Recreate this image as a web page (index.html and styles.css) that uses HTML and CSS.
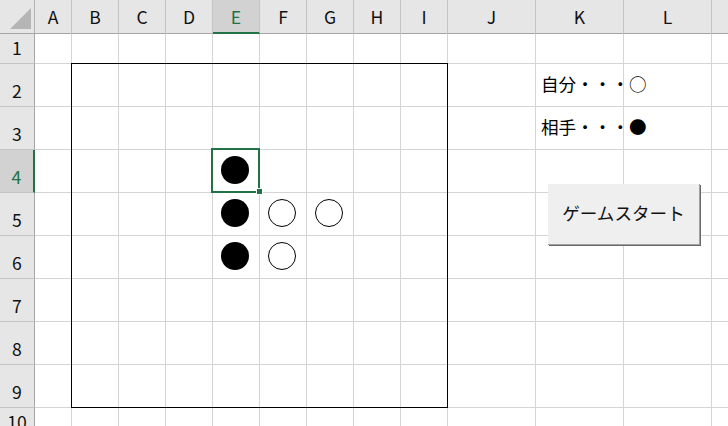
FILE: index.html
```html
<!DOCTYPE html>
<html lang="ja">
<head>
    <meta charset="UTF-8">
    <meta name="viewport" content="width=device-width, initial-scale=1.0">
    <title>オセロ</title>
    <link rel="stylesheet" href="styles.css">
</head>
<body>

    <div class="sheet">
        <!-- column headers -->
        <div class="corner"><span class="tri"></span></div>
        <div class="hd">A</div><div class="hd">B</div><div class="hd">C</div><div class="hd">D</div>
        <div class="hd on">E</div><div class="hd">F</div><div class="hd">G</div><div class="hd">H</div>
        <div class="hd">I</div><div class="hd">J</div><div class="hd">K</div><div class="hd">L</div><div class="hd"></div>

        <!-- row 1 -->
        <div class="rh">1</div>
        <div class="c"></div><div class="c"></div><div class="c"></div><div class="c"></div><div class="c"></div><div class="c"></div>
        <div class="c"></div><div class="c"></div><div class="c"></div><div class="c"></div><div class="c"></div><div class="c"></div><div class="c"></div>

        <!-- row 2 -->
        <div class="rh">2</div>
        <div class="c"></div><div class="c"></div><div class="c"></div><div class="c"></div><div class="c"></div><div class="c"></div>
        <div class="c"></div><div class="c"></div><div class="c"></div><div class="c"></div>
        <div class="c txt">自分・・・○</div><div class="c"></div><div class="c"></div>

        <!-- row 3 -->
        <div class="rh">3</div>
        <div class="c"></div><div class="c"></div><div class="c"></div><div class="c"></div><div class="c"></div><div class="c"></div>
        <div class="c"></div><div class="c"></div><div class="c"></div><div class="c"></div>
        <div class="c txt">相手・・・●</div><div class="c"></div><div class="c"></div>

        <!-- row 4 -->
        <div class="rh on">4</div>
        <div class="c"></div><div class="c"></div><div class="c"></div><div class="c"></div>
        <div class="c stone-cell"><span class="stone black"></span></div>
        <div class="c"></div><div class="c"></div><div class="c"></div><div class="c"></div><div class="c"></div><div class="c"></div><div class="c"></div><div class="c"></div>

        <!-- row 5 -->
        <div class="rh">5</div>
        <div class="c"></div><div class="c"></div><div class="c"></div><div class="c"></div>
        <div class="c stone-cell"><span class="stone black"></span></div>
        <div class="c stone-cell"><span class="stone white"></span></div>
        <div class="c stone-cell"><span class="stone white"></span></div>
        <div class="c"></div><div class="c"></div><div class="c"></div><div class="c"></div><div class="c"></div><div class="c"></div>

        <!-- row 6 -->
        <div class="rh">6</div>
        <div class="c"></div><div class="c"></div><div class="c"></div><div class="c"></div>
        <div class="c stone-cell"><span class="stone black"></span></div>
        <div class="c stone-cell"><span class="stone white"></span></div>
        <div class="c"></div><div class="c"></div><div class="c"></div><div class="c"></div><div class="c"></div><div class="c"></div><div class="c"></div>

        <!-- row 7 -->
        <div class="rh">7</div>
        <div class="c"></div><div class="c"></div><div class="c"></div><div class="c"></div><div class="c"></div><div class="c"></div>
        <div class="c"></div><div class="c"></div><div class="c"></div><div class="c"></div><div class="c"></div><div class="c"></div><div class="c"></div>

        <!-- row 8 -->
        <div class="rh">8</div>
        <div class="c"></div><div class="c"></div><div class="c"></div><div class="c"></div><div class="c"></div><div class="c"></div>
        <div class="c"></div><div class="c"></div><div class="c"></div><div class="c"></div><div class="c"></div><div class="c"></div><div class="c"></div>

        <!-- row 9 -->
        <div class="rh">9</div>
        <div class="c"></div><div class="c"></div><div class="c"></div><div class="c"></div><div class="c"></div><div class="c"></div>
        <div class="c"></div><div class="c"></div><div class="c"></div><div class="c"></div><div class="c"></div><div class="c"></div><div class="c"></div>

        <!-- row 10 -->
        <div class="rh">10</div>
        <div class="c"></div><div class="c"></div><div class="c"></div><div class="c"></div><div class="c"></div><div class="c"></div>
        <div class="c"></div><div class="c"></div><div class="c"></div><div class="c"></div><div class="c"></div><div class="c"></div><div class="c"></div>

        <!-- things drawn over the cells -->
        <div class="overlay">
            <div class="board"></div>
            <div class="sel"><span class="handle"></span></div>
            <button class="btn" type="button">ゲームスタート</button>
        </div>
    </div>

</body>
</html>
```

FILE: styles.css
```css
body {
    margin: 0;
    font-family: "Noto Sans CJK JP", "Noto Sans", sans-serif;
    font-size: 17.6px;
    color: #111;
    background: #fff;
    overflow: hidden;
}
.sheet {
    position: relative;
    display: grid;
    grid-template-columns: 35px 37px repeat(8, 47px) repeat(4, 88px);
    grid-template-rows: 34px 30px repeat(8, 43px) 30px;
    width: 800px;
}
.corner {
    background: #e6e6e6;
    border-right: 1px solid #b4b4b4;
    border-bottom: 1px solid #a6a6a6;
    display: flex;
    justify-content: flex-end;
    align-items: flex-end;
    padding: 0 3px 4px 0;
}
.tri {
    width: 21px;
    height: 21px;
    background: #b5b5b5;
    clip-path: polygon(100% 0, 100% 100%, 0 100%);
}
.hd {
    background: #e6e6e6;
    border-right: 1px solid #c4c4c4;
    border-bottom: 1px solid #a6a6a6;
    display: flex;
    align-items: center;
    justify-content: center;
}
.hd.on {
    background: #d2d2d2;
    color: #217346;
    border-bottom: 2px solid #217346;
}
.rh {
    background: #e6e6e6;
    border-right: 1px solid #a6a6a6;
    border-bottom: 1px solid #c4c4c4;
    display: flex;
    align-items: flex-end;
    justify-content: center;
    line-height: 20px;
    padding-bottom: 5px;
}
.rh.on {
    background: #d2d2d2;
    color: #217346;
    border-right: 2px solid #217346;
}
.c {
    border-right: 1px solid #d4d4d4;
    border-bottom: 1px solid #d4d4d4;
    display: flex;
    align-items: center;
    justify-content: center;
}
.c.txt {
    justify-content: flex-start;
    padding: 0 0 4px 5px;
    white-space: nowrap;
    color: #000;
}
.stone-cell {
    padding: 0 2px 2px 0;
}
.stone {
    width: 28px;
    height: 28px;
    border-radius: 50%;
    box-sizing: border-box;
}
.stone.black {
    background: #000;
}
.stone.white {
    background: #fff;
    border: 1.5px solid #000;
}
.overlay {
    position: absolute;
    inset: 0;
    display: grid;
    grid-template-columns: 35px 37px repeat(8, 47px) repeat(4, 88px);
    grid-template-rows: 34px 30px repeat(8, 43px) 30px;
    pointer-events: none;
}
.board {
    grid-column: 3 / 11;
    grid-row: 3 / 11;
    margin: -1px 0 0 -1px;
    border: 1px solid #000;
}
.sel {
    grid-column: 6;
    grid-row: 5;
    margin: -2px 0 0 -2px;
    border: 2px solid #217346;
    position: relative;
}
.handle {
    position: absolute;
    right: -4px;
    bottom: -3px;
    width: 5px;
    height: 5px;
    background: #217346;
    box-shadow: 0 0 0 1px #fff;
}
.btn {
    grid-column: 12 / 14;
    grid-row: 5 / 8;
    align-self: start;
    justify-self: start;
    margin: 34px 0 0 12px;
    width: 152px;
    height: 61px;
    box-sizing: border-box;
    padding: 0 0 3px;
    background: #efefef;
    border: none;
    border-right: 1px solid #a0a0a0;
    border-bottom: 1px solid #a0a0a0;
    box-shadow: 1px 1px 0 #696969;
    font: inherit;
    color: #111;
    pointer-events: auto;
}
```
